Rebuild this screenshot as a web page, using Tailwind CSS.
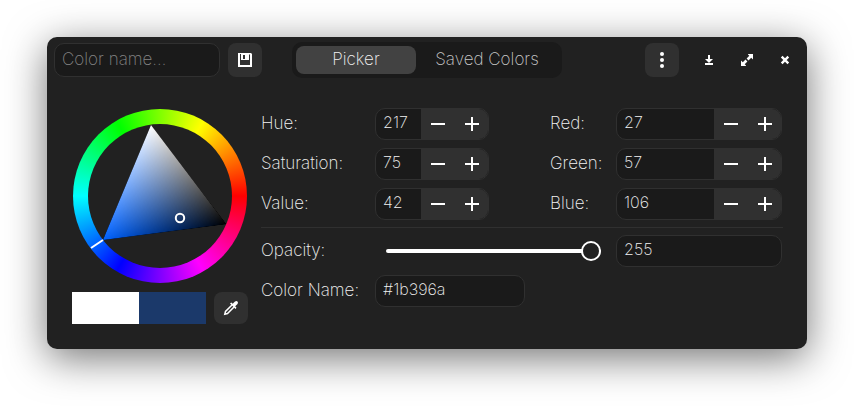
<!DOCTYPE html>
<html lang="en">
<head>
<meta charset="utf-8">
<meta name="viewport" content="width=device-width, initial-scale=1">
<title>Color Picker</title>
<script src="https://cdn.jsdelivr.net/npm/@tailwindcss/browser@4"></script>
</head>
<body class="min-h-screen bg-white px-[47px] pt-[37px] pb-[57px] font-['Inter','Liberation_Sans',sans-serif] text-base leading-5 font-extralight text-[#f2f2f2]">
<main class="rounded-[10px] bg-[#212121] shadow-[0_9px_40px_rgba(0,0,0,0.55)]">
  <header class="grid h-[46px] grid-cols-[1fr_270px_1fr] items-center px-[7px] text-[17px]">
    <div class="flex gap-2">
      <input type="text" aria-label="Color name" placeholder="Color name…" class="h-[34px] w-[166px] rounded-[10px] border border-[#303030] bg-[#1a1a1a] px-[7px] pb-[3px] outline-none placeholder:text-[#858585]">
      <button aria-label="Save color" class="flex h-[34px] w-[34px] items-center justify-center rounded-lg bg-[#303030]">
        <svg class="h-4 w-4" viewBox="0 0 16 16" fill="#fff"><path fill-rule="evenodd" d="M1 1h13l1 1v13H1ZM3 2v11h10V3l-1-1v6H4V2ZM6 3v4h2V3Z"/></svg>
      </button>
    </div>
    <nav class="flex h-9 rounded-[10px] bg-[#1a1a1a] p-1">
      <button class="w-[120px] rounded-lg bg-[#424242] pb-[3px]">Picker</button>
      <button class="flex-1 pb-[3px] text-[#c8c8c8]">Saved Colors</button>
    </nav>
    <div class="-mr-0.5 flex items-center justify-end gap-1">
      <button aria-label="Menu" class="mr-[9px] flex h-[34px] w-[34px] items-center justify-center rounded-lg bg-[#303030]">
        <svg class="h-4 w-4" viewBox="0 0 16 16" fill="#fff"><circle cx="8" cy="2" r="2"/><circle cx="8" cy="8" r="2"/><circle cx="8" cy="14" r="2"/></svg>
      </button>
      <button aria-label="Minimize" class="flex h-[34px] w-[34px] items-center justify-center">
        <svg class="h-4 w-4" viewBox="0 0 16 16" fill="#fff"><path d="M7 3h2v4h3L8 11 4 7h3ZM4 11h8v2H4Z"/></svg>
      </button>
      <button aria-label="Maximize" class="flex h-[34px] w-[34px] items-center justify-center">
        <svg class="h-4 w-4" viewBox="0 0 16 16" fill="#fff"><path d="M9 2h5v5.500L12.200 5.700 9.500 8.400 7.600 6.500 10.300 3.800 9 2.500ZM2 8.500 3.800 10.300 6.500 7.600 8.400 9.500 5.700 12.200 7 13.500V14H2Z"/></svg>
      </button>
      <button aria-label="Close" class="flex h-[34px] w-[34px] items-center justify-center">
        <svg class="h-4 w-4" viewBox="0 0 16 16" stroke="#fff" stroke-width="2.400"><path d="m4.700 4.700 6.600 6.600M11.300 4.700l-6.600 6.600"/></svg>
      </button>
    </div>
  </header>

  <div class="flex gap-[13px] py-[25px] pr-6 pl-[25px]">
    <section aria-label="Color wheel" class="w-[176px] shrink-0 pt-px">
      <div class="mx-px grid aspect-square rounded-full bg-[conic-gradient(from_90deg,#f00,#f0f,#00f,#0ff,#0f0,#ff0,#f00)]">
        <div class="col-start-1 row-start-1 m-[15px] rounded-full bg-[#212121]"></div>
        <svg class="isolate col-start-1 row-start-1 h-full w-full" viewBox="0 0 174 174">
          <defs>
            <linearGradient id="white" gradientUnits="userSpaceOnUse" x1="78" y1="16" x2="91.9" y2="122.9"><stop stop-color="#fff"/><stop offset="1" stop-color="#000"/></linearGradient>
            <linearGradient id="hue" gradientUnits="userSpaceOnUse" x1="30" y1="131" x2="115.9" y2="66"><stop stop-color="#0062ff"/><stop offset="1" stop-color="#000"/></linearGradient>
          </defs>
          <path d="M78 16 30 131 153 115Z" fill="url(#white)"/>
          <path d="M78 16 30 131 153 115Z" fill="url(#hue)" class="mix-blend-plus-lighter"/>
          <path d="M18 139 30 131" stroke="#fff" stroke-width="2"/>
          <circle cx="107" cy="109" r="4.200" fill="none" stroke="#fff" stroke-width="2"/>
        </svg>
      </div>
      <div class="mt-[9px] flex gap-2">
        <div class="flex h-8 flex-1"><div class="flex-1 bg-white"></div><div class="flex-1 bg-[#1b396a]"></div></div>
        <button aria-label="Pick color from screen" class="flex h-8 w-[34px] items-center justify-center rounded-lg bg-[#303030]">
          <svg class="h-4 w-4" viewBox="0 0 16 16"><path d="M9 5 2.500 11.500 1.800 14.200 4.500 13.500 11 7" fill="none" stroke="#fff" stroke-width="1.500"/><path d="M7 3.500 8.300 2.500 9.700 3.800 12 1.500Q13.500.5 14.500 1.500 15.500 2.500 14.500 4L12.200 6.300 13.500 7.700 12.500 9Z" fill="#fff"/></svg>
        </button>
      </div>
    </section>

    <form class="min-w-0 flex-1">
      <div class="mr-px grid grid-cols-[114px_114px_1fr_66px_166px] items-center gap-y-2">
        <label for="h" class="pb-[3px] text-[17px]">Hue:</label>
        <div class="flex h-8 overflow-hidden rounded-[10px] border border-[#303030] bg-[#1a1a1a]">
          <input id="h" value="217" inputmode="numeric" class="min-w-0 flex-1 pb-[5px] pl-[7px] outline-none">
          <button type="button" aria-label="Decrease hue" class="flex w-[34px] items-center justify-center bg-[#303030]"><svg class="h-4 w-4" viewBox="0 0 16 16" fill="#fff"><path d="M1 7h14v2H1Z"/></svg></button>
          <button type="button" aria-label="Increase hue" class="flex w-[33px] items-center justify-center bg-[#303030]"><svg class="h-4 w-4" viewBox="0 0 16 16" fill="#fff"><path d="M1 7h6V1h2v6h6v2H9v6H7V9H1Z"/></svg></button>
        </div>
        <label for="r" class="col-start-4 pb-[3px] text-[17px]">Red:</label>
        <div class="flex h-8 overflow-hidden rounded-[10px] border border-[#303030] bg-[#1a1a1a]">
          <input id="r" value="27" inputmode="numeric" class="min-w-0 flex-1 pb-[5px] pl-[7px] outline-none">
          <button type="button" aria-label="Decrease red" class="flex w-[34px] items-center justify-center bg-[#303030]"><svg class="h-4 w-4" viewBox="0 0 16 16" fill="#fff"><path d="M1 7h14v2H1Z"/></svg></button>
          <button type="button" aria-label="Increase red" class="flex w-[33px] items-center justify-center bg-[#303030]"><svg class="h-4 w-4" viewBox="0 0 16 16" fill="#fff"><path d="M1 7h6V1h2v6h6v2H9v6H7V9H1Z"/></svg></button>
        </div>

        <label for="s" class="pb-[3px] text-[17px]">Saturation:</label>
        <div class="flex h-8 overflow-hidden rounded-[10px] border border-[#303030] bg-[#1a1a1a]">
          <input id="s" value="75" inputmode="numeric" class="min-w-0 flex-1 pb-[5px] pl-[7px] outline-none">
          <button type="button" aria-label="Decrease saturation" class="flex w-[34px] items-center justify-center bg-[#303030]"><svg class="h-4 w-4" viewBox="0 0 16 16" fill="#fff"><path d="M1 7h14v2H1Z"/></svg></button>
          <button type="button" aria-label="Increase saturation" class="flex w-[33px] items-center justify-center bg-[#303030]"><svg class="h-4 w-4" viewBox="0 0 16 16" fill="#fff"><path d="M1 7h6V1h2v6h6v2H9v6H7V9H1Z"/></svg></button>
        </div>
        <label for="g" class="col-start-4 pb-[3px] text-[17px]">Green:</label>
        <div class="flex h-8 overflow-hidden rounded-[10px] border border-[#303030] bg-[#1a1a1a]">
          <input id="g" value="57" inputmode="numeric" class="min-w-0 flex-1 pb-[5px] pl-[7px] outline-none">
          <button type="button" aria-label="Decrease green" class="flex w-[34px] items-center justify-center bg-[#303030]"><svg class="h-4 w-4" viewBox="0 0 16 16" fill="#fff"><path d="M1 7h14v2H1Z"/></svg></button>
          <button type="button" aria-label="Increase green" class="flex w-[33px] items-center justify-center bg-[#303030]"><svg class="h-4 w-4" viewBox="0 0 16 16" fill="#fff"><path d="M1 7h6V1h2v6h6v2H9v6H7V9H1Z"/></svg></button>
        </div>

        <label for="v" class="pb-[3px] text-[17px]">Value:</label>
        <div class="flex h-8 overflow-hidden rounded-[10px] border border-[#303030] bg-[#1a1a1a]">
          <input id="v" value="42" inputmode="numeric" class="min-w-0 flex-1 pb-[5px] pl-[7px] outline-none">
          <button type="button" aria-label="Decrease value" class="flex w-[34px] items-center justify-center bg-[#303030]"><svg class="h-4 w-4" viewBox="0 0 16 16" fill="#fff"><path d="M1 7h14v2H1Z"/></svg></button>
          <button type="button" aria-label="Increase value" class="flex w-[33px] items-center justify-center bg-[#303030]"><svg class="h-4 w-4" viewBox="0 0 16 16" fill="#fff"><path d="M1 7h6V1h2v6h6v2H9v6H7V9H1Z"/></svg></button>
        </div>
        <label for="b" class="col-start-4 pb-[3px] text-[17px]">Blue:</label>
        <div class="flex h-8 overflow-hidden rounded-[10px] border border-[#303030] bg-[#1a1a1a]">
          <input id="b" value="106" inputmode="numeric" class="min-w-0 flex-1 pb-[5px] pl-[7px] outline-none">
          <button type="button" aria-label="Decrease blue" class="flex w-[34px] items-center justify-center bg-[#303030]"><svg class="h-4 w-4" viewBox="0 0 16 16" fill="#fff"><path d="M1 7h14v2H1Z"/></svg></button>
          <button type="button" aria-label="Increase blue" class="flex w-[33px] items-center justify-center bg-[#303030]"><svg class="h-4 w-4" viewBox="0 0 16 16" fill="#fff"><path d="M1 7h6V1h2v6h6v2H9v6H7V9H1Z"/></svg></button>
        </div>
      </div>

      <hr class="my-[7px] border-[#303030]">

      <div class="mr-px grid grid-cols-[114px_1fr_166px] items-center gap-y-2">
        <label for="o" class="pb-[3px] text-[17px]">Opacity:</label>
        <input id="o" type="range" min="0" max="255" value="255" class="mr-[15px] ml-[11px] h-5 min-w-0 appearance-none bg-transparent [&::-webkit-slider-runnable-track]:h-1 [&::-webkit-slider-runnable-track]:rounded-full [&::-webkit-slider-runnable-track]:bg-white [&::-webkit-slider-thumb]:-mt-2 [&::-webkit-slider-thumb]:h-5 [&::-webkit-slider-thumb]:w-5 [&::-webkit-slider-thumb]:appearance-none [&::-webkit-slider-thumb]:rounded-full [&::-webkit-slider-thumb]:border-2 [&::-webkit-slider-thumb]:border-white [&::-webkit-slider-thumb]:bg-[#212121]">
        <input type="text" aria-label="Opacity value" value="255" class="h-8 min-w-0 rounded-[10px] border border-[#303030] bg-[#1a1a1a] px-[7px] pb-[5px] outline-none">
        <label for="n" class="pb-[3px] text-[17px] whitespace-nowrap">Color Name:</label>
        <input id="n" type="text" value="#1b396a" class="h-8 w-[150px] rounded-[10px] border border-[#303030] bg-[#1a1a1a] px-[7px] pb-[5px] outline-none">
      </div>
    </form>
  </div>
</main>
</body>
</html>
